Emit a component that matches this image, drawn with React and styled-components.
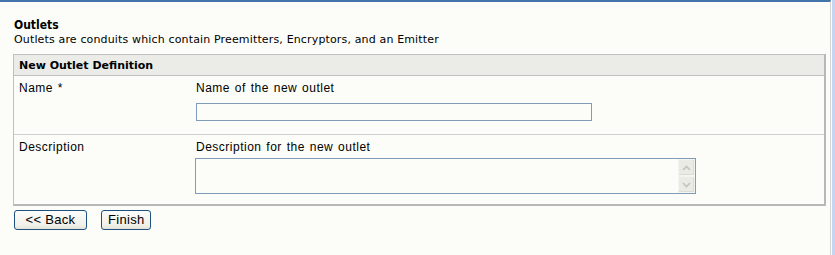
import React from "react";
import styled, { createGlobalStyle } from "styled-components";

const GlobalStyle = createGlobalStyle`
  html, body { margin: 0; padding: 0; background: #fcfdf9; }
  body { font-family: "Liberation Sans", Arial, sans-serif; }
`;

const Page = styled.div`
  display: flex;
  width: 835px;
  height: 255px;
  overflow: hidden;
`;

const Main = styled.div`
  width: 831px;
  box-sizing: border-box;
  border-top: 2px solid #4474ac;
  border-right: 1px solid #d4d4d0;
  padding: 16px 4px 0 13px;
`;

const RightEdge = styled.div`
  flex: 1;
  border-left: 1px solid #fcfdf9;
  background: #c6d6f2;
`;

const Title = styled.div`
  font-family: "DejaVu Sans Condensed", "DejaVu Sans", sans-serif;
  font-weight: bold;
  font-size: 12px;
  line-height: 15px;
  color: #000;
  padding-left: 1px;
`;

const Desc = styled.div`
  font-family: "DejaVu Sans", sans-serif;
  font-size: 11px;
  letter-spacing: 0.15px;
  line-height: 13px;
  color: #000;
  padding-left: 1px;
`;

const Panel = styled.div`
  margin-top: 8px;
  border: 1px solid #bcbcbc;
  border-right-width: 2px;
  border-bottom-width: 2px;
  border-color: #c0c0c0 #b8b8b8 #b8b8b8 #c0c0c0;
`;

const PanelHeader = styled.div`
  height: 21px;
  box-sizing: border-box;
  background: #ebebe8;
  border-bottom: 1px solid #c0c0c0;
  display: flex;
  align-items: center;
  padding-left: 5px;
  font-family: "DejaVu Sans", sans-serif;
  font-weight: bold;
  font-size: 11px;
`;

const Row = styled.div`
  display: grid;
  grid-template-columns: 182px 1fr;
  height: ${(p) => p.$h}px;
  box-sizing: border-box;
  padding-top: 5px;
  border-bottom: ${(p) => (p.$last ? "none" : "1px solid #cfcfcf")};
`;

const Label = styled.div`
  font-size: 12px;
  letter-spacing: 0.5px;
  word-spacing: 1px;
  line-height: 14px;
  color: #000;
  padding-left: 5px;
`;

const Field = styled.div`
  display: flex;
  flex-direction: column;
  align-items: flex-start;
`;

const Hint = styled.div`
  font-size: 12px;
  letter-spacing: 0.5px;
  word-spacing: 1px;
  line-height: 14px;
  color: #000;
  margin-bottom: ${(p) => p.$gap}px;
`;

const TextInput = styled.input`
  width: 396px;
  height: 18px;
  box-sizing: border-box;
  border: 1px solid #7f9db9;
  background: #fcfdf9;
  padding: 0 3px;
  margin: 0;
  outline: none;
  font-family: "Liberation Sans", Arial, sans-serif;
  font-size: 12px;
`;

const AreaBox = styled.div`
  display: flex;
  width: 501px;
  height: 36px;
  box-sizing: border-box;
  border: 1px solid #7f9db9;
  background: #fcfdf9;
  margin-left: -1px;
`;

const Area = styled.textarea`
  flex: 1;
  border: none;
  resize: none;
  background: transparent;
  outline: none;
  margin: 0;
  padding: 2px 3px;
  font-family: "Liberation Sans", Arial, sans-serif;
  font-size: 12px;
  overflow: hidden;
`;

const ScrollCol = styled.div`
  width: 17px;
  display: flex;
  flex-direction: column;
`;

const ScrollBtn = styled.div`
  height: 17px;
  box-sizing: border-box;
  border: 1px solid #f4f4f0;
  background: #ebebe6;
  display: flex;
  align-items: center;
  justify-content: center;
  box-shadow: inset -1px -1px 0 #dcdcd6;
`;

const Buttons = styled.div`
  display: flex;
  gap: 14px;
  margin-top: 4px;
  padding-left: 1px;
`;

const Button = styled.button`
  height: 20px;
  box-sizing: border-box;
  min-width: ${(p) => p.$w}px;
  border: 1px solid #1c5180;
  border-radius: 3px;
  background: linear-gradient(#fdfdfb, #f0efe8 80%, #e4e2d8);
  font-family: "Liberation Sans", Arial, sans-serif;
  font-size: 13px;
  letter-spacing: 0.3px;
  color: #000;
  padding: 0 6px;
  margin: 0;
  line-height: 16px;
`;

const Chevron = ({ up }) => (
  <svg width="9" height="6" viewBox="0 0 9 6">
    <path
      d={up ? "M1 5 L4.5 1.5 L8 5" : "M1 1 L4.5 4.5 L8 1"}
      fill="none"
      stroke="#c4c4bc"
      strokeWidth="1.6"
    />
  </svg>
);

export default function App() {
  return (
    <>
      <GlobalStyle />
      <Page>
        <Main>
          <Title>Outlets</Title>
          <Desc>Outlets are conduits which contain Preemitters, Encryptors, and an Emitter</Desc>
          <Panel>
            <PanelHeader>New Outlet Definition</PanelHeader>
            <Row $h={59}>
              <Label>Name *</Label>
              <Field>
                <Hint $gap={8}>Name of the new outlet</Hint>
                <TextInput type="text" />
              </Field>
            </Row>
            <Row $h={69} $last>
              <Label>Description</Label>
              <Field>
                <Hint $gap={4}>Description for the new outlet</Hint>
                <AreaBox>
                  <Area />
                  <ScrollCol>
                    <ScrollBtn><Chevron up /></ScrollBtn>
                    <ScrollBtn><Chevron /></ScrollBtn>
                  </ScrollCol>
                </AreaBox>
              </Field>
            </Row>
          </Panel>
          <Buttons>
            <Button $w={73}>&lt;&lt; Back</Button>
            <Button $w={50}>Finish</Button>
          </Buttons>
        </Main>
        <RightEdge />
      </Page>
    </>
  );
}
